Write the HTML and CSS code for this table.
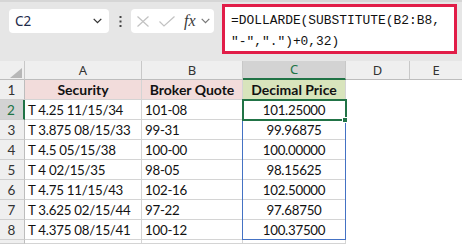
FILE: index.html
```html
<!DOCTYPE html>
<html>
<head>
<meta charset="utf-8">
<link rel="stylesheet" href="styles.css">
</head>
<body>
<div class="topbar">
  <div class="namebox">
    <span class="cellref">C2</span>
    <svg class="chev" width="9" height="6" viewBox="0 0 9 6"><path d="M0.7 0.9 L4.5 4.7 L8.3 0.9" fill="none" stroke="#333" stroke-width="1.3"/></svg>
  </div>
  <svg class="dots" width="3" height="11" viewBox="0 0 3 11"><rect x="0.5" y="0" width="2" height="2" fill="#444"/><rect x="0.5" y="4.5" width="2" height="2" fill="#444"/><rect x="0.5" y="9" width="2" height="2" fill="#444"/></svg>
  <div class="fxbox">
    <svg class="xicon" width="12" height="11" viewBox="0 0 12 11"><path d="M0.5 0.5 L11.5 10.5 M11.5 0.5 L0.5 10.5" stroke="#c2c2c2" stroke-width="1.2" fill="none"/></svg>
    <svg class="check" width="16" height="11" viewBox="0 0 16 11"><path d="M0.5 5.5 L5 10 L15.5 0.5" stroke="#c2c2c2" stroke-width="1.2" fill="none"/></svg>
    <span class="fx">fx</span>
    <svg class="chev2" width="9" height="6" viewBox="0 0 9 6"><path d="M0.7 0.9 L4.5 4.7 L8.3 0.9" fill="none" stroke="#777" stroke-width="1.2"/></svg>
  </div>
  <div class="formula">
    <div>=DOLLARDE(SUBSTITUTE(B2:B8,</div>
    <div>"-",".")+0,32)</div>
  </div>
</div>
<div class="sheet">
  <div class="corner"><svg width="12" height="10" viewBox="0 0 12 10"><polygon points="12,0 12,10 0,10" fill="#b7b7b7"/></svg></div>
  <div class="ch">A</div>
  <div class="ch">B</div>
  <div class="ch sel">C</div>
  <div class="ch">D</div>
  <div class="ch last">E</div>

  <div class="rh">1</div>
  <div class="c hdr pink">Security</div>
  <div class="c hdr pink">Broker Quote</div>
  <div class="c hdr green">Decimal Price</div>
  <div class="e"></div><div class="e"></div>

  <div class="rh sel">2</div>
  <div class="c">T 4.25 11/15/34</div>
  <div class="c">101-08</div>
  <div class="c num">101.25000</div>
  <div class="e"></div><div class="e"></div>

  <div class="rh">3</div>
  <div class="c">T 3.875 08/15/33</div>
  <div class="c">99-31</div>
  <div class="c num">99.96875</div>
  <div class="e"></div><div class="e"></div>

  <div class="rh">4</div>
  <div class="c">T 4.5 05/15/38</div>
  <div class="c">100-00</div>
  <div class="c num">100.00000</div>
  <div class="e"></div><div class="e"></div>

  <div class="rh">5</div>
  <div class="c">T 4 02/15/35</div>
  <div class="c">98-05</div>
  <div class="c num">98.15625</div>
  <div class="e"></div><div class="e"></div>

  <div class="rh">6</div>
  <div class="c">T 4.75 11/15/43</div>
  <div class="c">102-16</div>
  <div class="c num">102.50000</div>
  <div class="e"></div><div class="e"></div>

  <div class="rh">7</div>
  <div class="c">T 3.625 02/15/44</div>
  <div class="c">97-22</div>
  <div class="c num">97.68750</div>
  <div class="e"></div><div class="e"></div>

  <div class="rh">8</div>
  <div class="c">T 4.375 08/15/41</div>
  <div class="c">100-12</div>
  <div class="c num">100.37500</div>
  <div class="e"></div><div class="e"></div>

  <div class="rh"></div>
  <div class="c"></div>
  <div class="c"></div>
  <div class="c"></div>
  <div class="e"></div><div class="e"></div>

  <div class="range"></div>
  <div class="active"></div>
  <div class="handle"></div>
</div>
</body>
</html>
```
FILE: styles.css
```css
html, body {
  margin: 0;
  padding: 0;
  background: #ffffff;
  overflow: hidden;
}
body {
  width: 462px;
  height: 244px;
  font-family: Lato, "Liberation Sans", sans-serif;
}
.topbar {
  height: 61px;
  box-sizing: border-box;
  border-top: 2px solid #d6d6d6;
  background: #e6e6e6;
  display: flex;
  align-items: flex-start;
  padding-left: 9px;
}
.namebox {
  margin-top: 7px;
  width: 100px;
  height: 24px;
  box-sizing: border-box;
  background: #fff;
  border-radius: 4px;
  display: flex;
  align-items: center;
  justify-content: space-between;
  padding: 0 7px 0 6px;
}
.cellref {
  font-family: "Noto Sans", sans-serif;
  font-size: 13.5px;
  color: #1c2a4a;
}
.chev { display: block; }
.dots {
  margin: 14px 0 0 10px;
  display: block;
}
.fxbox {
  margin: 7px 0 0 9px;
  width: 83px;
  height: 24px;
  background: #fff;
  border-radius: 4px;
  display: flex;
  align-items: center;
}
.xicon { margin-left: 6px; display: block; }
.check { margin-left: 10px; display: block; }
.fx {
  margin-left: 9px;
  font-family: "Liberation Serif", serif;
  font-style: italic;
  font-size: 16px;
  color: #3a3a3a;
  line-height: 16px;
}
.chev2 { margin-left: 5px; display: block; }
.formula {
  margin: 2px 0 0 8px;
  width: 235px;
  height: 50px;
  box-sizing: border-box;
  border: 3px solid #e11d48;
  background: #fff;
  padding: 3px 0 0 6px;
  font-family: "Liberation Mono", monospace;
  font-size: 12.9px;
  line-height: 21px;
  color: #111;
  white-space: nowrap;
}
.sheet {
  position: relative;
  display: grid;
  grid-template-columns: 25px 117px 101px 103px 64px 52px;
  grid-template-rows: 19px repeat(8, 20px) 4px;
  background: #fff;
}
.corner {
  background: #efefef;
  border-right: 1px solid #c8c8c8;
  border-bottom: 1px solid #bdbdbd;
  box-sizing: border-box;
  display: flex;
  align-items: flex-end;
  justify-content: flex-end;
  padding: 0 2px 1px 0;
}
.corner svg { display: block; }
.ch {
  background: #efefef;
  border-right: 1px solid #c8c8c8;
  border-bottom: 1px solid #bdbdbd;
  box-sizing: border-box;
  font-family: "Noto Sans", sans-serif;
  font-size: 13px;
  color: #333;
  text-align: center;
  line-height: 18px;
}
.ch.last { border-right: none; }
.ch.sel {
  background: #d3d3d3;
  color: #217346;
  border-bottom: 2px solid #217346;
  line-height: 17px;
}
.rh {
  background: #efefef;
  border-right: 1px solid #bdbdbd;
  border-bottom: 1px solid #cfcfcf;
  box-sizing: border-box;
  font-family: Lato, sans-serif;
  font-size: 13.5px;
  color: #333;
  text-align: center;
  line-height: 20px;
  padding-right: 1px;
}
.rh.sel {
  background: #d3d3d3;
  color: #217346;
  border-right: 2px solid #217346;
}
.c {
  border-right: 1px solid #d4d4d4;
  border-bottom: 1px solid #d4d4d4;
  box-sizing: border-box;
  font-size: 13.3px;
  letter-spacing: -0.25px;
  line-height: 20px;
  color: #111;
  padding-left: 3px;
  white-space: nowrap;
  overflow: hidden;
}
.c.num {
  text-align: center;
  padding-left: 0;
}
.c.hdr {
  font-weight: bold;
  font-size: 14px;
  text-align: center;
  padding-left: 0;
  letter-spacing: 0;
}
.c.pink { background: #f2dcdb; }
.c.green { background: #d8e4bc; }
.e { background: #fff; }
.range {
  position: absolute;
  left: 242px;
  top: 38px;
  width: 104px;
  height: 141px;
  box-sizing: border-box;
  border: 1px solid #4472c4;
  pointer-events: none;
}
.active {
  position: absolute;
  left: 242px;
  top: 38px;
  width: 105px;
  height: 22px;
  box-sizing: border-box;
  border: 2px solid #217346;
  pointer-events: none;
}
.handle {
  position: absolute;
  left: 342px;
  top: 56px;
  width: 6px;
  height: 6px;
  box-sizing: border-box;
  background: #217346;
  border: 1px solid #fff;
}
```
